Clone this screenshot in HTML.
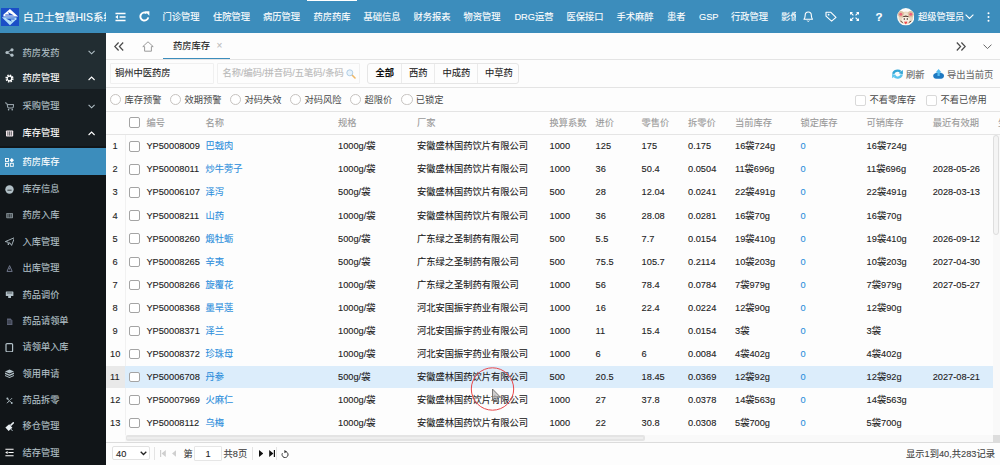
<!DOCTYPE html><html lang="zh-CN"><head><meta charset="utf-8"><title>药房库存</title><style>
*{box-sizing:border-box;margin:0;padding:0}
html,body{width:1000px;height:465px;overflow:hidden;background:#fdfdfd}
body{font-family:"Liberation Sans","Noto Sans CJK SC",sans-serif;font-size:9.25px;color:#1c1c1c;position:relative;-webkit-text-stroke:0.1px}
.a{position:absolute;white-space:nowrap}
.t{position:absolute;white-space:nowrap;line-height:12px;height:12px}
#hdr{left:0;top:0;width:1000px;height:33px;background:#3c8dbc}
#hdr .t{color:#fff}
#side{left:0;top:33px;width:106px;height:432px;background:#222d32;overflow:hidden}
#side .t{color:#b2c0c7;left:22.6px;font-size:9.2px}
#side svg{position:absolute}
.hl{position:absolute;left:106px;width:894px;height:1px;background:#e4e4e4}
.cb{position:absolute;width:10.6px;height:10.6px;border:1px solid #a4a4a4;border-radius:2px;background:#fff}
.rd{position:absolute;width:11.4px;height:11.4px;border:1px solid #c6c3c0;border-radius:50%;background:#fff;top:93.7px;margin-left:-0.2px}
.th{color:#9a9a9a}
.lk{color:#2e8fdc}
</style></head><body>
<div id="hdr" class="a">
<div class="a" style="left:1.1px;top:8px;width:17.9px;height:17.7px;background:#1b4fc7"><svg width="17.9" height="17.7" viewBox="0 0 17.9 17.7"><path d="M8.97 0.9L17.1 8.6L2.3 8.45L2.5 6.6Z" fill="#fff"/><path d="M4.3 7.6V6.4H8.3L6.8 4.1L13 7.6Z" fill="#1b4fc7"/><path d="M8.97 17.3L0.85 9.3L15.65 9.5L15.4 11.3Z" fill="#b4e0f9"/><path d="M13.6 10.4V11.5H9.6L11.1 13.8L4.9 10.4Z" fill="#1b4fc7"/></svg></div>
<div class="t" style="left:23px;top:10.6px;font-size:10.5px;width:82.5px;overflow:hidden">白卫士智慧HIS系统</div>
<svg class="a" style="left:114.8px;top:11.5px" width="11" height="10" viewBox="0 0 12 10"><g stroke="#fff" stroke-width="1.6" fill="none"><path d="M0.5 1.2H11.5M5 5H11.5M0.5 8.8H11.5"/></g><path d="M0.3 5L3.3 2.8V7.2Z" fill="#fff"/></svg>
<svg class="a" style="left:139px;top:11px" width="11" height="11" viewBox="0 0 11 11"><path d="M9.3 6.4A4 4 0 1 1 7.6 2.2" fill="none" stroke="#fff" stroke-width="1.9"/><path d="M5.8 0.2L10.4 0.2L10.4 4.8Z" fill="#fff"/></svg>
<div class="t" style="left:162.6px;top:10.8px">门诊管理</div>
<div class="t" style="left:213.0px;top:10.8px">住院管理</div>
<div class="t" style="left:263.0px;top:10.8px">病历管理</div>
<div class="t" style="left:313.4px;top:10.8px">药房药库</div>
<div class="t" style="left:363.6px;top:10.8px">基础信息</div>
<div class="t" style="left:413.6px;top:10.8px">财务报表</div>
<div class="t" style="left:463.6px;top:10.8px">物资管理</div>
<div class="t" style="left:514.4px;top:10.8px">DRG运营</div>
<div class="t" style="left:566.4px;top:10.8px">医保接口</div>
<div class="t" style="left:616.6px;top:10.8px">手术麻醉</div>
<div class="t" style="left:667.0px;top:10.8px">患者</div>
<div class="t" style="left:699.0px;top:10.8px">GSP</div>
<div class="t" style="left:731.0px;top:10.8px">行政管理</div>
<div class="t" style="left:781px;top:10.8px;width:14.5px;overflow:hidden">影像</div>
<div class="a" style="left:306.6px;top:0;width:50.4px;height:1.3px;background:#fff"></div>
<svg class="a" style="left:802.5px;top:11.2px" width="10.5" height="11" viewBox="0 0 10.5 11"><path d="M1 8.2C2.2 7.2 2 5.5 2.2 4A3.05 3.05 0 0 1 8.3 4C8.5 5.5 8.3 7.2 9.5 8.2Z" fill="none" stroke="#fff" stroke-width="1.1" stroke-linejoin="round"/><path d="M4.2 9.6A1.1 1.1 0 0 0 6.3 9.6" fill="none" stroke="#fff" stroke-width="1"/></svg>
<svg class="a" style="left:824.8px;top:11.2px" width="12" height="11" viewBox="0 0 12 11"><path d="M1 1.2H5.6L11 6.3L6.6 10.2L1 5.2Z" fill="none" stroke="#fff" stroke-width="1.1" stroke-linejoin="round"/><circle cx="3.6" cy="3.7" r="0.9" fill="#fff"/></svg>
<svg class="a" style="left:850px;top:12px" width="9" height="9" viewBox="0 0 9 9"><g fill="#fff"><path d="M0 0H3L0 3Z"/><path d="M9 0H6L9 3Z"/><path d="M0 9H3L0 6Z"/><path d="M9 9H6L9 6Z"/></g><path d="M1 1L3.4 3.4M8 1L5.6 3.4M1 8L3.4 5.6M8 8L5.6 5.6" stroke="#fff" stroke-width="1.1"/></svg>
<div class="t" style="left:875.4px;top:9.8px;font-size:11.5px;font-weight:bold;line-height:14px;height:14px">?</div>
<svg class="a" style="left:896.8px;top:8.4px" width="17.6" height="17.6" viewBox="0 0 17.6 17.6"><defs><clipPath id="av"><circle cx="8.8" cy="8.8" r="8.7"/></clipPath></defs><g clip-path="url(#av)"><rect width="17.6" height="17.6" fill="#fdfbf8"/><ellipse cx="8.8" cy="9.8" rx="7.4" ry="6.4" fill="#ead9c4"/><ellipse cx="3.9" cy="6.2" rx="3" ry="3.1" fill="#dcbf9f"/><ellipse cx="13.7" cy="6.2" rx="3" ry="3.1" fill="#dcbf9f"/><circle cx="3.8" cy="6.2" r="1.5" fill="#f0627c"/><circle cx="13.8" cy="6.2" r="1.5" fill="#f0627c"/><ellipse cx="8.8" cy="11.2" rx="3.9" ry="4.4" fill="#faf0e2"/><path d="M6.3 6.8Q8.8 3.4 11.3 6.8Z" fill="#efe4d0"/><path d="M5 9.2Q8.8 5.6 12.6 9.2Q8.8 8.2 5 9.2Z" fill="#4a2f26"/><circle cx="7.3" cy="10.9" r="0.75" fill="#3a2a22"/><circle cx="10.3" cy="10.9" r="0.75" fill="#3a2a22"/><path d="M3.4 13L5.8 14.6M14.2 13L11.8 14.6" stroke="#6a4a3a" stroke-width="1"/><path d="M7.2 13.8Q8 13 8.8 13.8Q9.6 13 10.4 13.8Q10.4 15 8.8 16.2Q7.2 15 7.2 13.8Z" fill="#ee4a4a"/></g></svg>
<div class="t" style="left:918px;top:10.8px">超级管理员</div>
<svg class="a" style="left:964.6px;top:14px" width="9" height="5.4" viewBox="0 0 9 5.4"><path d="M0.6 0.6L4.5 4.5L8.4 0.6" fill="none" stroke="#fff" stroke-width="1.1"/></svg>
<svg class="a" style="left:986.5px;top:11.6px" width="3" height="10" viewBox="0 0 3 10"><circle cx="1.5" cy="1.2" r="1" fill="#fff"/><circle cx="1.5" cy="5" r="1" fill="#fff"/><circle cx="1.5" cy="8.8" r="1" fill="#fff"/></svg>
</div>
<div id="side" class="a">
<div class="a" style="left:0;top:56.3px;width:106px;height:380px;background:#171e22"></div>
<div class="a" style="left:0;top:113px;width:106px;height:320px;background:#111518"></div>
<div class="a" style="left:0;top:115.4px;width:106px;height:26.6px;background:#3c8dbc"></div>
<svg style="left:4.6px;top:15.3px" width="9.6" height="9" viewBox="0 0 9.6 9" fill="#b2c0c7"><circle cx="2" cy="4.5" r="1.6"/><circle cx="7" cy="1.8" r="1.6"/><circle cx="7" cy="7.2" r="1.6"/><path d="M2 4.5L7 1.8M2 4.5L7 7.2" stroke="#b2c0c7" stroke-width="0.9"/></svg>
<div class="t" style="top:13.6px;">药房发药</div>
<svg style="left:88.4px;top:17.4px" width="7.2" height="5" viewBox="0 0 7.2 5"><path d="M0.6 0.8L3.6 3.8L6.6 0.8" fill="none" stroke="#b2c0c7" stroke-width="1.1"/></svg>
<svg style="left:4.6px;top:40.7px" width="9.6" height="9" viewBox="0 0 9.6 9" fill="#fff"><circle cx="4.5" cy="4.5" r="3" fill="none" stroke="#fff" stroke-width="2.2" stroke-dasharray="1.3 1.05"/><circle cx="4.5" cy="4.5" r="2.3" fill="none" stroke="#fff" stroke-width="1.2"/></svg>
<div class="t" style="top:39.0px;color:#fff;">药房管理</div>
<svg style="left:88.4px;top:42.8px" width="7.2" height="5" viewBox="0 0 7.2 5"><path d="M0.6 4L3.6 1L6.6 4" fill="none" stroke="#fff" stroke-width="1.1"/></svg>
<svg style="left:4.6px;top:68.6px" width="9.6" height="9" viewBox="0 0 9.6 9" fill="#b2c0c7"><path d="M0 0.8L1.8 1.2L3 6H8L8.8 2.6H2.2" fill="none" stroke="#b2c0c7" stroke-width="0.9"/><circle cx="3.6" cy="7.8" r="0.8"/><circle cx="7.2" cy="7.8" r="0.8"/></svg>
<div class="t" style="top:66.9px;">采购管理</div>
<svg style="left:88.4px;top:70.7px" width="7.2" height="5" viewBox="0 0 7.2 5"><path d="M0.6 0.8L3.6 3.8L6.6 0.8" fill="none" stroke="#b2c0c7" stroke-width="1.1"/></svg>
<svg style="left:4.6px;top:95.7px" width="9.6" height="9" viewBox="0 0 9.6 9" fill="#fff"><rect x="1" y="1.5" width="7.2" height="6" rx="0.8" fill="#f4e8ec"/><path d="M2.9 2.4V6.6M4.6 2.4V6.6M6.3 2.4V6.6" stroke="#171e22" stroke-width="0.7"/></svg>
<div class="t" style="top:94.0px;color:#fff;">库存管理</div>
<svg style="left:88.4px;top:97.8px" width="7.2" height="5" viewBox="0 0 7.2 5"><path d="M0.6 4L3.6 1L6.6 4" fill="none" stroke="#fff" stroke-width="1.1"/></svg>
<svg style="left:4.6px;top:124.9px" width="9.6" height="9" viewBox="0 0 9.6 9" fill="#fff"><rect x="0.5" y="0.5" width="3" height="3" fill="none" stroke="#fff" stroke-width="0.9"/><rect x="0.5" y="5.3" width="3" height="3" fill="none" stroke="#fff" stroke-width="0.9"/><rect x="5.3" y="5.3" width="3" height="3" fill="none" stroke="#fff" stroke-width="0.9"/><path d="M6.8 0L9 2.2L6.8 4.4L4.6 2.2Z" fill="#fff"/></svg>
<div class="t" style="top:123.2px;color:#fff;">药房库存</div>
<svg style="left:4.6px;top:151.5px" width="9.6" height="9" viewBox="0 0 9.6 9" fill="#b2c0c7"><circle cx="4.5" cy="4.5" r="4.2"/><path d="M2.4 5.2H6.6" stroke="#111518" stroke-width="0.8"/></svg>
<div class="t" style="top:149.8px;">库存信息</div>
<svg style="left:4.6px;top:177.9px" width="9.6" height="9" viewBox="0 0 9.6 9" fill="#b2c0c7"><rect x="1.2" y="2" width="6.8" height="5.2" rx="0.7" opacity="0.7"/><path d="M3 2.8V6.4M4.6 2.8V6.4M6.2 2.8V6.4" stroke="#111518" stroke-width="0.7"/></svg>
<div class="t" style="top:176.2px;">药房入库</div>
<svg style="left:4.6px;top:204.3px" width="9.6" height="9" viewBox="0 0 9.6 9" fill="#b2c0c7"><path d="M0.3 4.6L9.6 0.6L6.6 8.4L4.6 5.6L3.2 8V5.2Z" fill="none" stroke="#b2c0c7" stroke-width="0.9" stroke-linejoin="round"/></svg>
<div class="t" style="top:202.6px;">入库管理</div>
<svg style="left:4.6px;top:230.7px" width="9.6" height="9" viewBox="0 0 9.6 9" fill="#b2c0c7"><path d="M4.6 1.6L7.2 7.4H2Z" fill="none" stroke="#7a8298" stroke-width="0.9"/><path d="M4.6 3.8V5.6" stroke="#7a8298" stroke-width="0.8"/></svg>
<div class="t" style="top:229.0px;">出库管理</div>
<svg style="left:4.6px;top:257.3px" width="9.6" height="9" viewBox="0 0 9.6 9" fill="#b2c0c7"><rect x="0.8" y="1.4" width="7.6" height="4.6" rx="0.6"/><rect x="3.2" y="6" width="2.8" height="2"/><path d="M2 3H7.2" stroke="#111518" stroke-width="0.6"/></svg>
<div class="t" style="top:255.6px;">药品调价</div>
<svg style="left:4.6px;top:283.5px" width="9.6" height="9" viewBox="0 0 9.6 9" fill="#b2c0c7"><path d="M2 1.6H5.6L7.4 3.4V8H2Z" fill="#8e94b4" opacity="0.6"/><path d="M2.4 4H6.4M2.4 6H6.4" stroke="#111518" stroke-width="0.7"/></svg>
<div class="t" style="top:281.8px;">药品请领单</div>
<svg style="left:4.6px;top:309.9px" width="9.6" height="9" viewBox="0 0 9.6 9" fill="#b2c0c7"><rect x="1" y="0.6" width="6.6" height="8.2" rx="1" fill="none" stroke="#b2c0c7" stroke-width="1.2"/></svg>
<div class="t" style="top:308.2px;">请领单入库</div>
<svg style="left:4.6px;top:336.3px" width="9.6" height="9" viewBox="0 0 9.6 9" fill="#b2c0c7"><path d="M4.5 0.4L9 2.4L4.5 4.4L0 2.4Z"/><path d="M0 3.6L4.5 5.6L9 3.6V5L4.5 7L0 5Z"/><path d="M0 6L4.5 8L9 6V7L4.5 9L0 7Z"/></svg>
<div class="t" style="top:334.6px;">领用申请</div>
<svg style="left:4.6px;top:362.7px" width="9.6" height="9" viewBox="0 0 9.6 9" fill="#b2c0c7"><path d="M2 2.4L7 7.2M2 7.2L4.2 5M7 2.2L5.4 3.8" stroke="#b2c0c7" stroke-width="1" fill="none"/><circle cx="2.4" cy="2.6" r="1" /><circle cx="6.8" cy="7" r="0.9"/></svg>
<div class="t" style="top:361.0px;">药品拆零</div>
<svg style="left:4.6px;top:389.0px" width="9.6" height="9" viewBox="0 0 9.6 9" fill="#b2c0c7"><path d="M0.4 5.6L4.2 2.2L7.4 5.8L3.6 9Z" fill="#e8eef2"/><path d="M5.4 3.6L8.8 0.4" stroke="#e8eef2" stroke-width="1.6"/><path d="M5.6 7L7.8 9" stroke="#b2c0c7" stroke-width="1"/></svg>
<div class="t" style="top:387.3px;">移仓管理</div>
<svg style="left:4.6px;top:415.3px" width="9.6" height="9" viewBox="0 0 9.6 9" fill="#b2c0c7"><path d="M0.4 1.2H8.6M3.4 4.5H8.6M0.4 7.8H8.6" stroke="#fff" stroke-width="1.1"/><path d="M0.2 4.5L2.6 3V6Z" fill="#fff"/></svg>
<div class="t" style="top:413.6px;">结存管理</div>
</div>
<svg class="a" style="left:114px;top:42px" width="10" height="9" viewBox="0 0 10 9"><path d="M4.6 0.5L0.8 4.5L4.6 8.5M9.2 0.5L5.4 4.5L9.2 8.5" fill="none" stroke="#4a4a4a" stroke-width="1.2"/></svg>
<svg class="a" style="left:141.6px;top:40.6px" width="12" height="11" viewBox="0 0 12 11"><path d="M0.8 5.6L6 0.8L11.2 5.6H9.4V10.2H2.6V5.6Z" fill="none" stroke="#9a9a9a" stroke-width="1" stroke-linejoin="round"/></svg>
<div class="t" style="left:173px;top:40.4px;color:#222">药房库存</div>
<div class="t" style="left:216.4px;top:39.8px;color:#bbb;font-size:10px">×</div>
<div class="a" style="left:163px;top:57.7px;width:67px;height:2px;background:#3c8dbc"></div>
<svg class="a" style="left:956px;top:42px" width="10" height="9" viewBox="0 0 10 9"><path d="M0.8 0.5L4.6 4.5L0.8 8.5M5.4 0.5L9.2 4.5L5.4 8.5" fill="none" stroke="#4a4a4a" stroke-width="1.2"/></svg>
<svg class="a" style="left:983px;top:43.6px" width="9" height="5.6" viewBox="0 0 9 5.6"><path d="M0.5 0.6L4.5 4.6L8.5 0.6" fill="none" stroke="#666" stroke-width="1"/></svg>
<div class="hl" style="top:59.2px"></div>
<div class="a" style="left:109.6px;top:63px;width:104px;height:20.6px;border:1px solid #f0f0f0;border-radius:1px;background:#fdfdfd"></div>
<div class="t" style="left:115px;top:67.4px;color:#222">铜州中医药房</div>
<div class="a" style="left:216.6px;top:63px;width:143px;height:20.6px;border:1px solid #f0f0f0;border-radius:1px;background:#fdfdfd"></div>
<div class="t" style="left:222.4px;top:67.4px;color:#b9b9b9;font-size:9.25px">名称/编码/拼音码/五笔码/条码</div>
<svg class="a" style="left:346.2px;top:68.6px" width="10" height="10" viewBox="0 0 10 10"><path d="M5.8 5.8L9 9" stroke="#efb866" stroke-width="1.6" stroke-linecap="round"/><circle cx="3.8" cy="3.8" r="3" fill="#e8f3fb" stroke="#a9c8e2" stroke-width="0.9"/></svg>
<div class="a" style="left:367px;top:63px;width:152.4px;height:20.6px;border:1px solid #e6e6e6;border-radius:3px;background:#fdfdfd"></div>
<div class="a" style="left:401.4px;top:64px;width:1px;height:18.6px;background:#ebebeb"></div>
<div class="a" style="left:434.4px;top:64px;width:1px;height:18.6px;background:#ebebeb"></div>
<div class="a" style="left:477.4px;top:64px;width:1px;height:18.6px;background:#ebebeb"></div>
<div class="t" style="left:375.4px;top:67.4px;color:#111;font-weight:bold">全部</div>
<div class="t" style="left:409px;top:67.4px;color:#222">西药</div>
<div class="t" style="left:442.4px;top:67.4px;color:#222">中成药</div>
<div class="t" style="left:485px;top:67.4px;color:#222">中草药</div>
<svg class="a" style="left:892px;top:68.8px" width="11" height="10.2" viewBox="0 0 11 10.2"><path d="M1.3 4.9A4.3 3.7 0 0 1 8.6 2.7" fill="none" stroke="#32a6d6" stroke-width="2.3"/><path d="M10.9 1V5.2L6.6 4.2Z" fill="#32a6d6"/><path d="M9.7 5.3A4.3 3.7 0 0 1 2.4 7.5" fill="none" stroke="#5bc5ee" stroke-width="2.3"/><path d="M0.1 9.2V5L4.4 6Z" fill="#5bc5ee"/></svg>
<div class="t" style="left:906px;top:68.5px;color:#6a6a6a">刷新</div>
<svg class="a" style="left:933px;top:68.8px" width="11.2" height="9.8" viewBox="0 0 11.2 9.8"><path d="M2.8 9.7A2.75 2.75 0 0 1 2.2 4.3Q5.6 2.6 9 4.3A2.75 2.75 0 0 1 8.4 9.7Z" fill="#1f79c1"/><path d="M5.6 0L8.6 3.4H6.7V7H4.5V3.4H2.6Z" fill="#55bdf1"/></svg>
<div class="t" style="left:947px;top:68.5px;color:#6a6a6a">导出当前页</div>
<div class="hl" style="top:87px"></div>
<div class="rd" style="left:110.0px"></div>
<div class="t" style="left:124.4px;top:93.9px;color:#484848;-webkit-text-stroke:0">库存预警</div>
<div class="rd" style="left:170.0px"></div>
<div class="t" style="left:184.4px;top:93.9px;color:#484848;-webkit-text-stroke:0">效期预警</div>
<div class="rd" style="left:230.0px"></div>
<div class="t" style="left:244.4px;top:93.9px;color:#484848;-webkit-text-stroke:0">对码失效</div>
<div class="rd" style="left:290.0px"></div>
<div class="t" style="left:304.4px;top:93.9px;color:#484848;-webkit-text-stroke:0">对码风险</div>
<div class="rd" style="left:350.0px"></div>
<div class="t" style="left:364.4px;top:93.9px;color:#484848;-webkit-text-stroke:0">超限价</div>
<div class="rd" style="left:401.4px"></div>
<div class="t" style="left:415.8px;top:93.9px;color:#484848;-webkit-text-stroke:0">已锁定</div>
<div class="cb" style="left:855.4px;top:95px;border-color:#d9d9d9"></div>
<div class="t" style="left:869.6px;top:93.6px;color:#484848;-webkit-text-stroke:0">不看零库存</div>
<div class="cb" style="left:926.2px;top:95px;border-color:#d9d9d9"></div>
<div class="t" style="left:940.6px;top:93.6px;color:#484848;-webkit-text-stroke:0">不看已停用</div>
<div class="hl" style="top:111px"></div>
<div class="cb" style="left:129px;top:117.4px"></div>
<div class="t th" style="left:146.4px;top:116.8px">编号</div>
<div class="t th" style="left:205.6px;top:116.8px">名称</div>
<div class="t th" style="left:338.0px;top:116.8px">规格</div>
<div class="t th" style="left:417.0px;top:116.8px">厂家</div>
<div class="t th" style="left:549.5px;top:116.8px">换算系数</div>
<div class="t th" style="left:595.6px;top:116.8px">进价</div>
<div class="t th" style="left:641.6px;top:116.8px">零售价</div>
<div class="t th" style="left:688.0px;top:116.8px">拆零价</div>
<div class="t th" style="left:735.0px;top:116.8px">当前库存</div>
<div class="t th" style="left:800.6px;top:116.8px">锁定库存</div>
<div class="t th" style="left:866.6px;top:116.8px">可销库存</div>
<div class="t th" style="left:932.7px;top:116.8px">最近有效期</div>
<div class="t th" style="left:998px;top:116.8px">生</div>
<div class="hl" style="top:134.1px;background:#e5e5e5"></div>
<div class="a" style="left:125px;top:135px;width:1px;height:301px;background:#f1f1f1"></div>
<div class="t" style="left:112.6px;top:140.3px">1</div>
<div class="cb" style="left:129px;top:141.2px"></div>
<div class="t" style="left:146.4px;top:140.3px">YP50008009</div>
<div class="t lk" style="left:205.6px;top:140.3px">巴戟肉</div>
<div class="t" style="left:338.0px;top:140.3px">1000g/袋</div>
<div class="t" style="left:417.0px;top:140.3px">安徽盛林国药饮片有限公司</div>
<div class="t" style="left:549.5px;top:140.3px">1000</div>
<div class="t" style="left:595.6px;top:140.3px">125</div>
<div class="t" style="left:641.6px;top:140.3px">175</div>
<div class="t" style="left:688.0px;top:140.3px">0.175</div>
<div class="t" style="left:735.0px;top:140.3px">16袋724g</div>
<div class="t lk" style="left:800.6px;top:140.3px">0</div>
<div class="t" style="left:866.6px;top:140.3px">16袋724g</div>
<div class="t" style="left:112.6px;top:163.4px">2</div>
<div class="cb" style="left:129px;top:164.3px"></div>
<div class="t" style="left:146.4px;top:163.4px">YP50008011</div>
<div class="t lk" style="left:205.6px;top:163.4px">炒牛蒡子</div>
<div class="t" style="left:338.0px;top:163.4px">1000g/袋</div>
<div class="t" style="left:417.0px;top:163.4px">安徽盛林国药饮片有限公司</div>
<div class="t" style="left:549.5px;top:163.4px">1000</div>
<div class="t" style="left:595.6px;top:163.4px">36</div>
<div class="t" style="left:641.6px;top:163.4px">50.4</div>
<div class="t" style="left:688.0px;top:163.4px">0.0504</div>
<div class="t" style="left:735.0px;top:163.4px">11袋696g</div>
<div class="t lk" style="left:800.6px;top:163.4px">0</div>
<div class="t" style="left:866.6px;top:163.4px">11袋696g</div>
<div class="t" style="left:932.7px;top:163.4px">2028-05-26</div>
<div class="t" style="left:112.6px;top:186.4px">3</div>
<div class="cb" style="left:129px;top:187.3px"></div>
<div class="t" style="left:146.4px;top:186.4px">YP50006107</div>
<div class="t lk" style="left:205.6px;top:186.4px">泽泻</div>
<div class="t" style="left:338.0px;top:186.4px">500g/袋</div>
<div class="t" style="left:417.0px;top:186.4px">安徽盛林国药饮片有限公司</div>
<div class="t" style="left:549.5px;top:186.4px">500</div>
<div class="t" style="left:595.6px;top:186.4px">28</div>
<div class="t" style="left:641.6px;top:186.4px">12.04</div>
<div class="t" style="left:688.0px;top:186.4px">0.0241</div>
<div class="t" style="left:735.0px;top:186.4px">22袋491g</div>
<div class="t lk" style="left:800.6px;top:186.4px">0</div>
<div class="t" style="left:866.6px;top:186.4px">22袋491g</div>
<div class="t" style="left:932.7px;top:186.4px">2028-03-13</div>
<div class="t" style="left:112.6px;top:209.5px">4</div>
<div class="cb" style="left:129px;top:210.4px"></div>
<div class="t" style="left:146.4px;top:209.5px">YP50008211</div>
<div class="t lk" style="left:205.6px;top:209.5px">山药</div>
<div class="t" style="left:338.0px;top:209.5px">1000g/袋</div>
<div class="t" style="left:417.0px;top:209.5px">安徽盛林国药饮片有限公司</div>
<div class="t" style="left:549.5px;top:209.5px">1000</div>
<div class="t" style="left:595.6px;top:209.5px">36</div>
<div class="t" style="left:641.6px;top:209.5px">28.08</div>
<div class="t" style="left:688.0px;top:209.5px">0.0281</div>
<div class="t" style="left:735.0px;top:209.5px">16袋70g</div>
<div class="t lk" style="left:800.6px;top:209.5px">0</div>
<div class="t" style="left:866.6px;top:209.5px">16袋70g</div>
<div class="t" style="left:112.6px;top:232.5px">5</div>
<div class="cb" style="left:129px;top:233.4px"></div>
<div class="t" style="left:146.4px;top:232.5px">YP50008260</div>
<div class="t lk" style="left:205.6px;top:232.5px">煅牡蛎</div>
<div class="t" style="left:338.0px;top:232.5px">500g/袋</div>
<div class="t" style="left:417.0px;top:232.5px">广东绿之圣制药有限公司</div>
<div class="t" style="left:549.5px;top:232.5px">500</div>
<div class="t" style="left:595.6px;top:232.5px">5.5</div>
<div class="t" style="left:641.6px;top:232.5px">7.7</div>
<div class="t" style="left:688.0px;top:232.5px">0.0154</div>
<div class="t" style="left:735.0px;top:232.5px">19袋410g</div>
<div class="t lk" style="left:800.6px;top:232.5px">0</div>
<div class="t" style="left:866.6px;top:232.5px">19袋410g</div>
<div class="t" style="left:932.7px;top:232.5px">2026-09-12</div>
<div class="t" style="left:112.6px;top:255.6px">6</div>
<div class="cb" style="left:129px;top:256.5px"></div>
<div class="t" style="left:146.4px;top:255.6px">YP50008265</div>
<div class="t lk" style="left:205.6px;top:255.6px">辛夷</div>
<div class="t" style="left:338.0px;top:255.6px">500g/袋</div>
<div class="t" style="left:417.0px;top:255.6px">广东绿之圣制药有限公司</div>
<div class="t" style="left:549.5px;top:255.6px">500</div>
<div class="t" style="left:595.6px;top:255.6px">75.5</div>
<div class="t" style="left:641.6px;top:255.6px">105.7</div>
<div class="t" style="left:688.0px;top:255.6px">0.2114</div>
<div class="t" style="left:735.0px;top:255.6px">10袋203g</div>
<div class="t lk" style="left:800.6px;top:255.6px">0</div>
<div class="t" style="left:866.6px;top:255.6px">10袋203g</div>
<div class="t" style="left:932.7px;top:255.6px">2027-04-30</div>
<div class="t" style="left:112.6px;top:278.6px">7</div>
<div class="cb" style="left:129px;top:279.5px"></div>
<div class="t" style="left:146.4px;top:278.6px">YP50008266</div>
<div class="t lk" style="left:205.6px;top:278.6px">旋覆花</div>
<div class="t" style="left:338.0px;top:278.6px">1000g/袋</div>
<div class="t" style="left:417.0px;top:278.6px">广东绿之圣制药有限公司</div>
<div class="t" style="left:549.5px;top:278.6px">1000</div>
<div class="t" style="left:595.6px;top:278.6px">56</div>
<div class="t" style="left:641.6px;top:278.6px">78.4</div>
<div class="t" style="left:688.0px;top:278.6px">0.0784</div>
<div class="t" style="left:735.0px;top:278.6px">7袋979g</div>
<div class="t lk" style="left:800.6px;top:278.6px">0</div>
<div class="t" style="left:866.6px;top:278.6px">7袋979g</div>
<div class="t" style="left:932.7px;top:278.6px">2027-05-27</div>
<div class="t" style="left:112.6px;top:301.7px">8</div>
<div class="cb" style="left:129px;top:302.6px"></div>
<div class="t" style="left:146.4px;top:301.7px">YP50008368</div>
<div class="t lk" style="left:205.6px;top:301.7px">墨旱莲</div>
<div class="t" style="left:338.0px;top:301.7px">1000g/袋</div>
<div class="t" style="left:417.0px;top:301.7px">河北安国振宇药业有限公司</div>
<div class="t" style="left:549.5px;top:301.7px">1000</div>
<div class="t" style="left:595.6px;top:301.7px">16</div>
<div class="t" style="left:641.6px;top:301.7px">22.4</div>
<div class="t" style="left:688.0px;top:301.7px">0.0224</div>
<div class="t" style="left:735.0px;top:301.7px">12袋90g</div>
<div class="t lk" style="left:800.6px;top:301.7px">0</div>
<div class="t" style="left:866.6px;top:301.7px">12袋90g</div>
<div class="t" style="left:112.6px;top:324.7px">9</div>
<div class="cb" style="left:129px;top:325.6px"></div>
<div class="t" style="left:146.4px;top:324.7px">YP50008371</div>
<div class="t lk" style="left:205.6px;top:324.7px">泽兰</div>
<div class="t" style="left:338.0px;top:324.7px">1000g/袋</div>
<div class="t" style="left:417.0px;top:324.7px">河北安国振宇药业有限公司</div>
<div class="t" style="left:549.5px;top:324.7px">1000</div>
<div class="t" style="left:595.6px;top:324.7px">11</div>
<div class="t" style="left:641.6px;top:324.7px">15.4</div>
<div class="t" style="left:688.0px;top:324.7px">0.0154</div>
<div class="t" style="left:735.0px;top:324.7px">3袋</div>
<div class="t lk" style="left:800.6px;top:324.7px">0</div>
<div class="t" style="left:866.6px;top:324.7px">3袋</div>
<div class="t" style="left:110.0px;top:347.8px">10</div>
<div class="cb" style="left:129px;top:348.7px"></div>
<div class="t" style="left:146.4px;top:347.8px">YP50008372</div>
<div class="t lk" style="left:205.6px;top:347.8px">珍珠母</div>
<div class="t" style="left:338.0px;top:347.8px">1000g/袋</div>
<div class="t" style="left:417.0px;top:347.8px">河北安国振宇药业有限公司</div>
<div class="t" style="left:549.5px;top:347.8px">1000</div>
<div class="t" style="left:595.6px;top:347.8px">6</div>
<div class="t" style="left:641.6px;top:347.8px">6</div>
<div class="t" style="left:688.0px;top:347.8px">0.0084</div>
<div class="t" style="left:735.0px;top:347.8px">4袋402g</div>
<div class="t lk" style="left:800.6px;top:347.8px">0</div>
<div class="t" style="left:866.6px;top:347.8px">4袋402g</div>
<div class="a" style="left:106px;top:365.5px;width:19.4px;height:22.7px;background:#e9e9e9"></div>
<div class="a" style="left:125.4px;top:365.5px;width:867.8px;height:22.7px;background:#dcedfb"></div>
<div class="t" style="left:110.0px;top:370.8px">11</div>
<div class="cb" style="left:129px;top:371.7px"></div>
<div class="t" style="left:146.4px;top:370.8px">YP50006708</div>
<div class="t lk" style="left:205.6px;top:370.8px">丹参</div>
<div class="t" style="left:338.0px;top:370.8px">500g/袋</div>
<div class="t" style="left:417.0px;top:370.8px">安徽盛林国药饮片有限公司</div>
<div class="t" style="left:549.5px;top:370.8px">500</div>
<div class="t" style="left:595.6px;top:370.8px">20.5</div>
<div class="t" style="left:641.6px;top:370.8px">18.45</div>
<div class="t" style="left:688.0px;top:370.8px">0.0369</div>
<div class="t" style="left:735.0px;top:370.8px">12袋92g</div>
<div class="t lk" style="left:800.6px;top:370.8px">0</div>
<div class="t" style="left:866.6px;top:370.8px">12袋92g</div>
<div class="t" style="left:932.7px;top:370.8px">2027-08-21</div>
<div class="t" style="left:110.0px;top:393.9px">12</div>
<div class="cb" style="left:129px;top:394.8px"></div>
<div class="t" style="left:146.4px;top:393.9px">YP50007969</div>
<div class="t lk" style="left:205.6px;top:393.9px">火麻仁</div>
<div class="t" style="left:338.0px;top:393.9px">1000g/袋</div>
<div class="t" style="left:417.0px;top:393.9px">安徽盛林国药饮片有限公司</div>
<div class="t" style="left:549.5px;top:393.9px">1000</div>
<div class="t" style="left:595.6px;top:393.9px">27</div>
<div class="t" style="left:641.6px;top:393.9px">37.8</div>
<div class="t" style="left:688.0px;top:393.9px">0.0378</div>
<div class="t" style="left:735.0px;top:393.9px">14袋563g</div>
<div class="t lk" style="left:800.6px;top:393.9px">0</div>
<div class="t" style="left:866.6px;top:393.9px">14袋563g</div>
<div class="t" style="left:110.0px;top:416.9px">13</div>
<div class="cb" style="left:129px;top:417.8px"></div>
<div class="t" style="left:146.4px;top:416.9px">YP50008112</div>
<div class="t lk" style="left:205.6px;top:416.9px">乌梅</div>
<div class="t" style="left:338.0px;top:416.9px">1000g/袋</div>
<div class="t" style="left:417.0px;top:416.9px">安徽盛林国药饮片有限公司</div>
<div class="t" style="left:549.5px;top:416.9px">1000</div>
<div class="t" style="left:595.6px;top:416.9px">22</div>
<div class="t" style="left:641.6px;top:416.9px">30.8</div>
<div class="t" style="left:688.0px;top:416.9px">0.0308</div>
<div class="t" style="left:735.0px;top:416.9px">5袋700g</div>
<div class="t lk" style="left:800.6px;top:416.9px">0</div>
<div class="t" style="left:866.6px;top:416.9px">5袋700g</div>
<div class="a" style="left:993.2px;top:135px;width:6.8px;height:300px;background:#f9f9f9"></div>
<div class="a" style="left:993px;top:135px;width:6.4px;height:100.4px;border:1.2px solid #dedede;background:#f4f4f4;border-radius:3px"></div>
<div class="a" style="left:125.4px;top:435.2px;width:867.8px;height:6.6px;background:#f9f9f9"></div>
<div class="a" style="left:125.6px;top:435.3px;width:519px;height:6.2px;background:#e4e4e4;border-radius:2px"></div>
<div class="a" style="left:127.4px;top:437.4px;width:515.4px;height:2px;background:#eeeeee"></div>
<div class="a" style="left:993px;top:435px;width:7px;height:6.8px;background:#dddddd"></div>
<div class="hl" style="top:442px;background:#dcdcdc"></div>
<div class="a" style="left:111.6px;top:446px;width:38px;height:14.4px;border:1px solid #e2e2e2;border-radius:2px;background:#fff"></div>
<div class="t" style="left:116px;top:448.2px">40</div>
<svg class="a" style="left:139.8px;top:451px" width="7" height="4.6" viewBox="0 0 7 4.6"><path d="M0.7 0.7L3.5 3.5L6.3 0.7" fill="none" stroke="#222" stroke-width="1.3"/></svg>
<div class="a" style="left:154.4px;top:446.6px;width:1px;height:13.6px;background:#e4e4e4"></div>
<div class="a" style="left:252.4px;top:446.6px;width:1px;height:13.6px;background:#e4e4e4"></div>
<div class="a" style="left:276.2px;top:446.6px;width:1px;height:13.6px;background:#e4e4e4"></div>
<svg class="a" style="left:160px;top:450.2px" width="6" height="7" viewBox="0 0 6 7"><path d="M0.6 0V7" stroke="#cfcfcf" stroke-width="1.2"/><path d="M5.8 0L1.6 3.5L5.8 7Z" fill="#cfcfcf"/></svg>
<svg class="a" style="left:171.8px;top:450.2px" width="4.4" height="7" viewBox="0 0 4.4 7"><path d="M4.4 0L0 3.5L4.4 7Z" fill="#cfcfcf"/></svg>
<div class="t" style="left:183.6px;top:448.2px;color:#444">第</div>
<div class="a" style="left:194.4px;top:446px;width:27.2px;height:14.6px;border:1px solid #e6e6e6;border-radius:1px;background:#fff"></div>
<div class="t" style="left:205.4px;top:448.2px">1</div>
<div class="t" style="left:223.6px;top:448.2px;color:#444">共8页</div>
<svg class="a" style="left:259px;top:450.2px" width="4.4" height="7" viewBox="0 0 4.4 7"><path d="M0 0L4.4 3.5L0 7Z" fill="#111"/></svg>
<svg class="a" style="left:268.8px;top:450.2px" width="6" height="7" viewBox="0 0 6 7"><path d="M5.4 0V7" stroke="#111" stroke-width="1.2"/><path d="M0.2 0L4.4 3.5L0.2 7Z" fill="#111"/></svg>
<svg class="a" style="left:281px;top:449.6px" width="8" height="8.4" viewBox="0 0 8 8.4"><path d="M4 1.6A3 3 0 1 1 1.4 3.2" fill="none" stroke="#333" stroke-width="1"/><path d="M3.4 0L5.8 1.6L3.4 3.2Z" fill="#333"/></svg>
<div class="t" style="left:906px;top:448.2px;color:#444">显示1到40,共283记录</div>
<svg class="a" style="left:468px;top:364px" width="50" height="50" viewBox="0 0 50 50"><circle cx="24.5" cy="25" r="21.2" fill="none" stroke="#e8474a" stroke-width="1"/><path d="M24.5 25V36.4L27.2 34L29.2 38.4L30.9 37.6L29 33.3H32.6Z" fill="#bdbdbd" fill-opacity="0.75" stroke="#6e6e6e" stroke-width="0.9" stroke-linejoin="round"/></svg>
</body></html>
